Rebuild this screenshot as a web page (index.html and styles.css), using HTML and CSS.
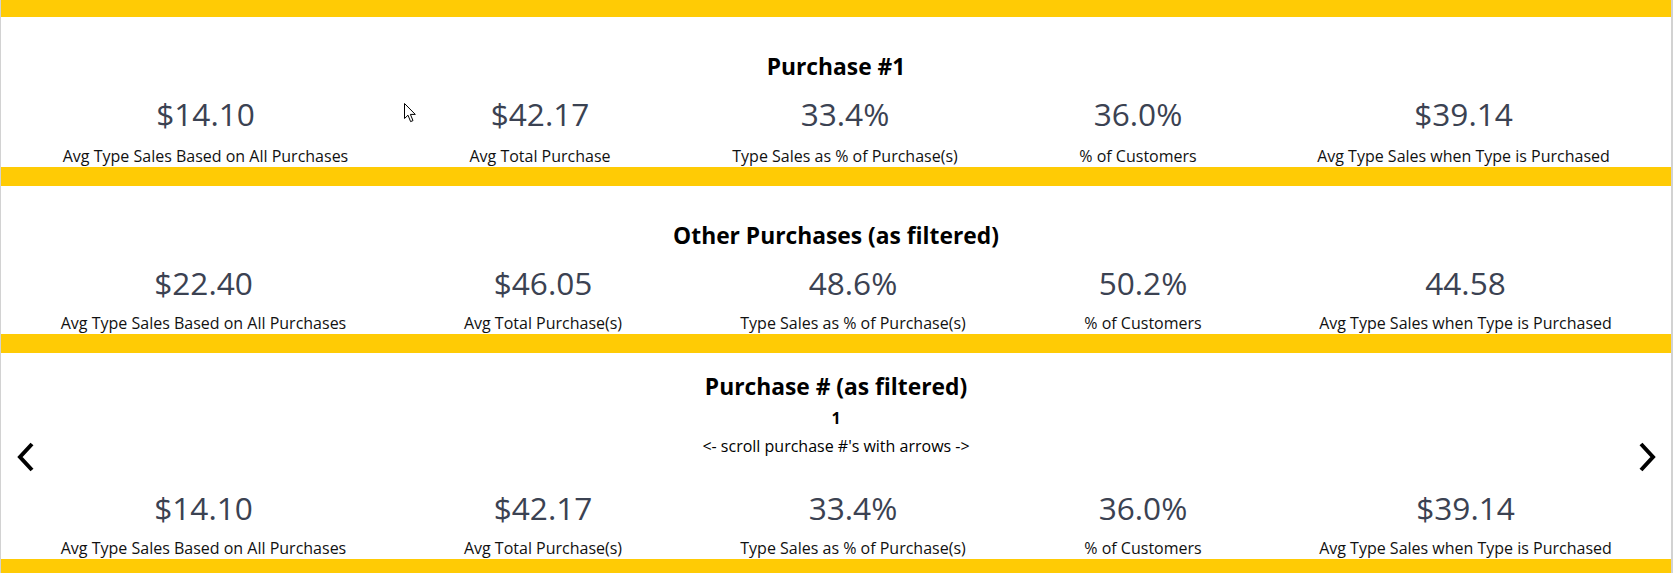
FILE: index.html
```html
<!DOCTYPE html>
<html>
<head>
<meta charset="utf-8">
<link rel="stylesheet" href="styles.css">
</head>
<body>
<div class="page">
  <div class="bar bar-top"></div>

  <section class="section s1">
    <h2 class="title">Purchase #1</h2>
    <div class="stats cols-a">
      <div class="stat"><div class="value">$14.10</div><div class="label">Avg Type Sales Based on All Purchases</div></div>
      <div class="stat"><div class="value">$42.17</div><div class="label">Avg Total Purchase</div></div>
      <div class="stat"><div class="value">33.4%</div><div class="label">Type Sales as % of Purchase(s)</div></div>
      <div class="stat"><div class="value">36.0%</div><div class="label">% of Customers</div></div>
      <div class="stat"><div class="value">$39.14</div><div class="label">Avg Type Sales when Type is Purchased</div></div>
    </div>
    <svg class="cursor" width="13" height="20" viewBox="0 0 13 20"><path d="M0.5 0.5 L0.5 15.5 L4 12.2 L6.6 18.6 L9 17.6 L6.4 11.4 L11.3 11.4 Z" fill="#fff" stroke="#000" stroke-width="1"/></svg>
  </section>

  <div class="bar"></div>

  <section class="section s2">
    <h2 class="title">Other Purchases (as filtered)</h2>
    <div class="stats cols-b">
      <div class="stat"><div class="value">$22.40</div><div class="label">Avg Type Sales Based on All Purchases</div></div>
      <div class="stat"><div class="value">$46.05</div><div class="label">Avg Total Purchase(s)</div></div>
      <div class="stat"><div class="value">48.6%</div><div class="label">Type Sales as % of Purchase(s)</div></div>
      <div class="stat"><div class="value">50.2%</div><div class="label">% of Customers</div></div>
      <div class="stat"><div class="value">44.58</div><div class="label">Avg Type Sales when Type is Purchased</div></div>
    </div>
  </section>

  <div class="bar"></div>

  <section class="section s3">
    <h2 class="title">Purchase # (as filtered)</h2>
    <div class="num">1</div>
    <div class="hint">&lt;- scroll purchase #'s with arrows -&gt;</div>
    <div class="stats cols-b">
      <div class="stat"><div class="value">$14.10</div><div class="label">Avg Type Sales Based on All Purchases</div></div>
      <div class="stat"><div class="value">$42.17</div><div class="label">Avg Total Purchase(s)</div></div>
      <div class="stat"><div class="value">33.4%</div><div class="label">Type Sales as % of Purchase(s)</div></div>
      <div class="stat"><div class="value">36.0%</div><div class="label">% of Customers</div></div>
      <div class="stat"><div class="value">$39.14</div><div class="label">Avg Type Sales when Type is Purchased</div></div>
    </div>
    <svg class="arrow arrow-left" width="20" height="32" viewBox="0 0 20 32"><path d="M17 3 L5 16 L17 29" fill="none" stroke="#000" stroke-width="4"/></svg>
    <svg class="arrow arrow-right" width="20" height="32" viewBox="0 0 20 32"><path d="M3 3 L15 16 L3 29" fill="none" stroke="#000" stroke-width="4"/></svg>
  </section>

  <div class="bar bar-bottom"></div>
</div>
</body>
</html>
```

FILE: styles.css
```css
html, body {
  margin: 0;
  padding: 0;
  background: #ffffff;
}

.page {
  width: 1673px;
  height: 573px;
  box-sizing: border-box;
  border-left: 1px solid #d2d2d2;
  border-right: 2px solid #d2d2d2;
  font-family: "Open Sans", "Noto Sans", sans-serif;
  color: #000;
  display: flex;
  flex-direction: column;
  overflow: hidden;
}

.bar {
  background: #ffcb05;
  height: 19px;
  flex: none;
}

.bar-top {
  height: 17px;
}

.bar-bottom {
  height: 14px;
}

.section {
  position: relative;
  display: flex;
  flex-direction: column;
  align-items: stretch;
  flex: none;
}

.s1 {
  height: 150px;
  padding-top: 36px;
  box-sizing: border-box;
}

.s2 {
  height: 148px;
  padding-top: 36px;
  box-sizing: border-box;
}

.s3 {
  height: 206px;
  padding-top: 20px;
  box-sizing: border-box;
}

.title {
  margin: 0;
  font-size: 22.8px;
  font-weight: 700;
  line-height: 28px;
  text-align: center;
}

.num {
  margin-top: 6px;
  font-size: 16px;
  font-weight: 700;
  line-height: 22px;
  text-align: center;
}

.hint {
  margin-top: 6px;
  font-size: 16px;
  line-height: 22px;
  text-align: center;
}

.stats {
  display: grid;
  margin-top: 12px;
}

.s3 .stats {
  margin-top: 30px;
}

.cols-a {
  grid-template-columns: 409px 260px 350px 236px 415px;
}

.cols-b {
  grid-template-columns: 405px 274px 346px 234px 411px;
}

.stat {
  display: flex;
  flex-direction: column;
  align-items: center;
  text-align: center;
  white-space: nowrap;
}

.value {
  font-size: 31.6px;
  line-height: 42px;
  color: #3b4252;
}

.label {
  margin-top: 10px;
  font-size: 16px;
  line-height: 22px;
  color: #111;
}

.s2 .label,
.s3 .label {
  margin-top: 8px;
}

.cursor {
  position: absolute;
  left: 403px;
  top: 86px;
}

.arrow {
  position: absolute;
  top: 88px;
}

.arrow-left {
  left: 14px;
}

.arrow-right {
  left: 1637px;
}
```
